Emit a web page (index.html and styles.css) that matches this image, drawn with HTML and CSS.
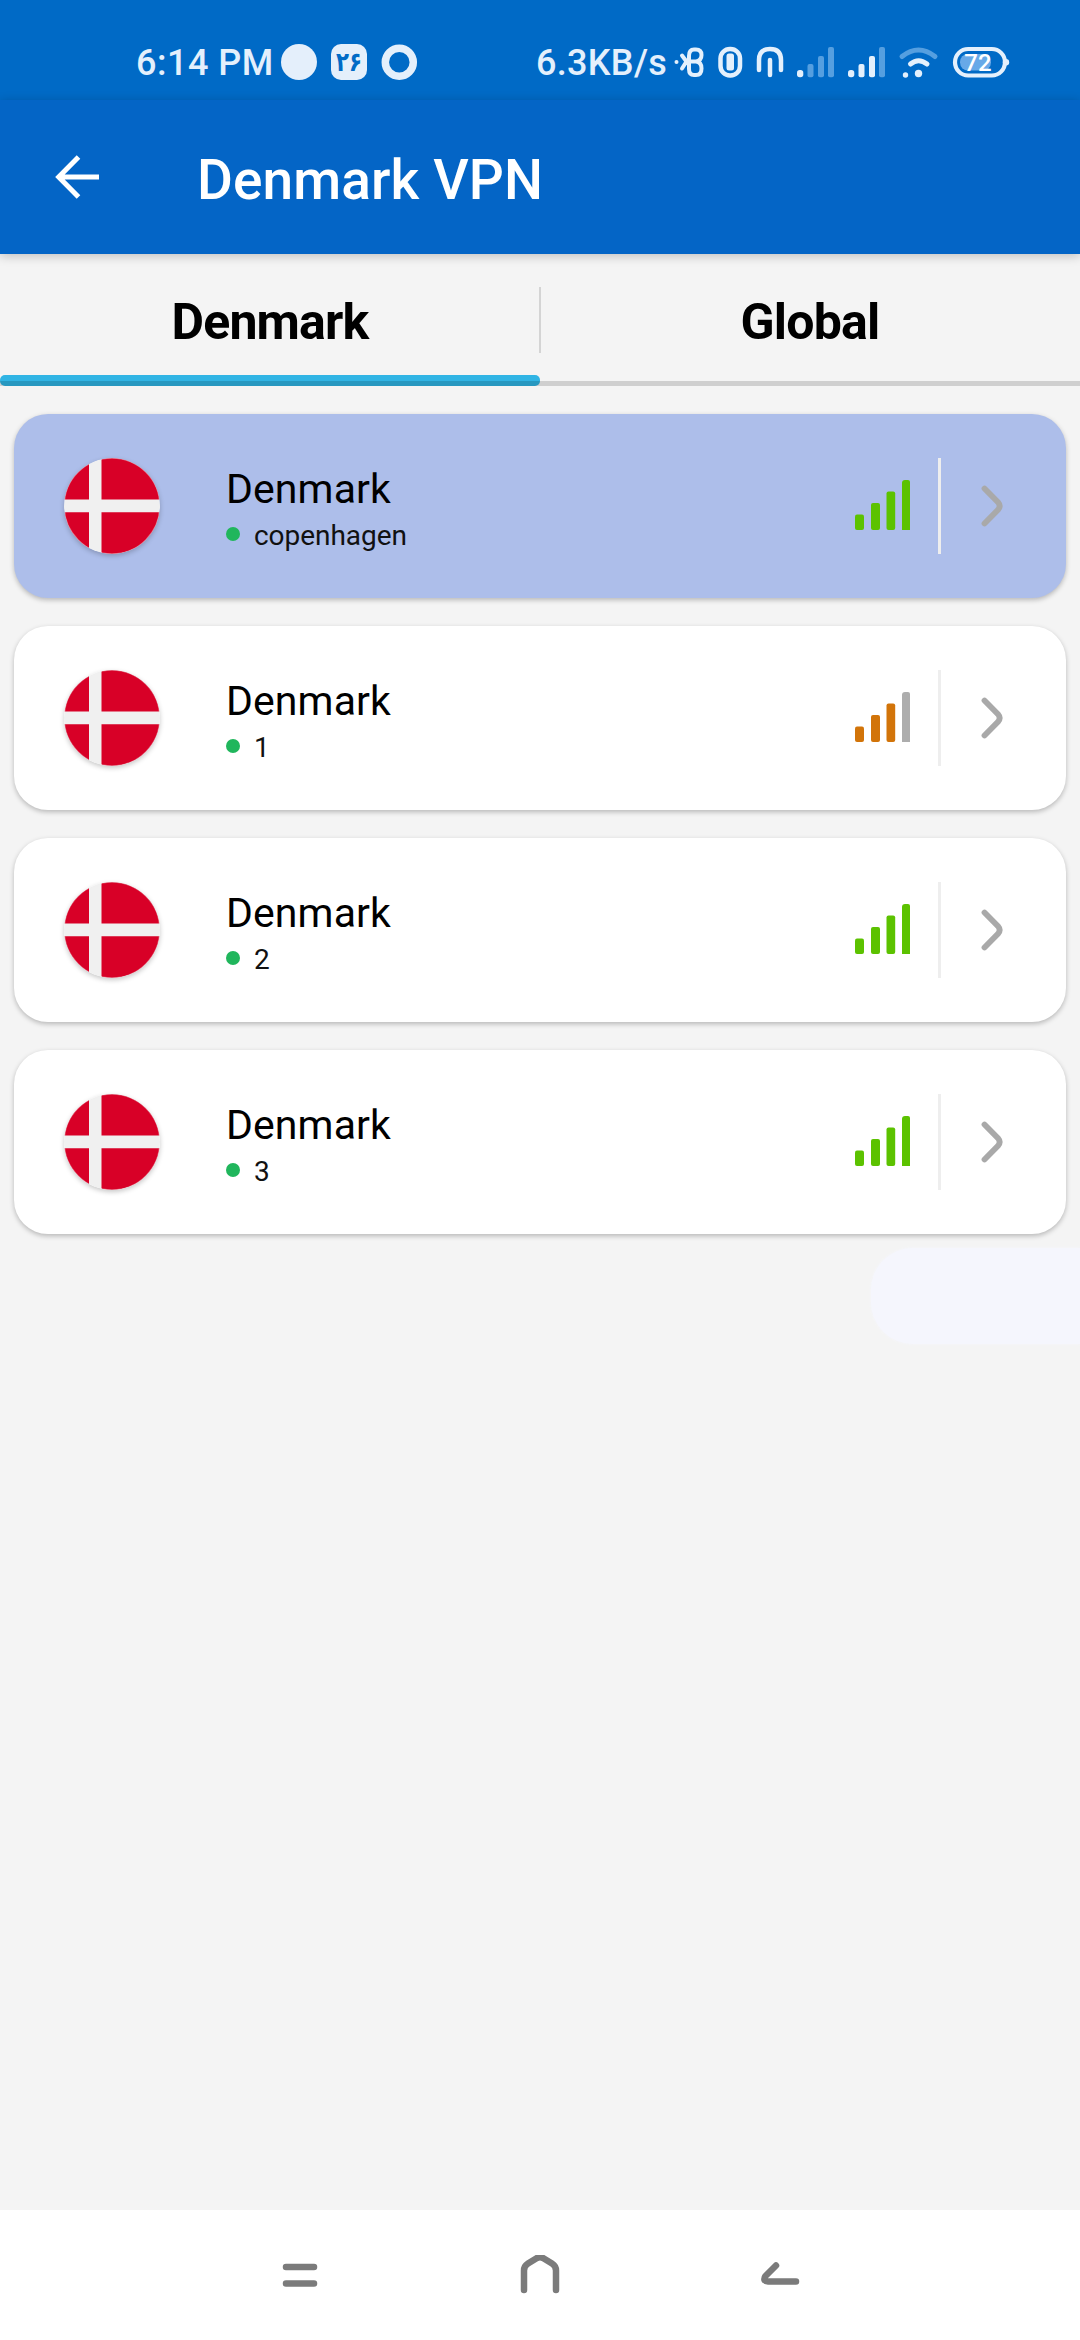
FILE: index.html
```html
<!DOCTYPE html>
<html lang="en">
<head>
<meta charset="utf-8">
<title>Denmark VPN</title>
<link rel="stylesheet" href="styles.css">
</head>
<body>
<svg width="0" height="0" class="defs">
  <symbol id="flag" viewBox="0 0 96 96">
    <clipPath id="round"><circle cx="48" cy="48" r="48"/></clipPath>
    <g clip-path="url(#round)">
      <rect width="96" height="96" fill="#f0f0f0"/>
      <path fill="#d80027" d="M0 0H25V41.5H0zM37.5 0H96V41.5H37.5zM0 54.2H25V96H0zM37.5 54.2H96V96H37.5z"/>
      <circle cx="48" cy="48" r="48" fill="none" stroke="#f0f0f0" stroke-opacity=".45" stroke-width="1.6"/>
    </g>
  </symbol>
  <symbol id="bars" viewBox="0 0 56 50">
    <rect x="0" y="34.5" width="9" height="15.5" rx="2"/>
    <rect x="16" y="23" width="9" height="27" rx="2"/>
    <rect x="31.5" y="11.5" width="8.7" height="38.5" rx="2"/>
    <path class="last" d="M47 50V3Q47 0 50 0H53Q55 0 55 2V50Z"/>
  </symbol>
  <symbol id="chevron" viewBox="0 0 22 42">
    <path d="M3.5 3.5L17 17.2Q20.300 21 17 24.800L3.500 38.500" fill="none" stroke="#a9a9a9" stroke-width="5.800" stroke-linecap="round"/>
  </symbol>
</svg>

<div class="screen">
  <header class="status">
    <span class="clock">6:14 PM</span>
    <svg class="notices" width="120" height="40" viewBox="280 42 120 40">
      <circle cx="299" cy="62" r="18" fill="#e4effb"/>
      <rect x="331" y="44" width="36" height="36" rx="10" fill="#e4effb"/>
      <text x="349" y="71" class="day" text-anchor="middle" textLength="26" lengthAdjust="spacingAndGlyphs">۲۶</text>
      <circle cx="399.300" cy="62.300" r="14" fill="none" stroke="#e4effb" stroke-width="7.500"/>
    </svg>
    <span class="speed">6.3KB/s</span>
    <svg class="system" width="340" height="40" viewBox="672 42 340 40" fill="none" stroke="#e4f0fc" stroke-linecap="round" stroke-linejoin="round">
      <g stroke-width="4.500">
        <path d="M689 56Q689 49.500 694 49.500H696Q701.500 49.500 701.500 55T696 61.500H686M696 61.500Q701.500 62 701.500 68.500T696 75H694Q689 75 689 69M689 56V69M682 55.500L686.500 61.500L682 68.500" stroke-width="4"/>
        <rect x="720.500" y="49" width="19.500" height="26.500" rx="9.500"/>
        <path d="M759 70V60Q759 49 770 49T781 60V70M770 60V75"/>
      </g>
      <circle cx="676.500" cy="62" r="2" fill="#e4f0fc" stroke="none"/>
      <rect x="726.500" y="53.500" width="7.500" height="17" rx="2.500" fill="#e4f0fc" stroke="none"/>
      <g fill="#e4f0fc" stroke="none">
        <rect x="797" y="70" width="6.300" height="7.300" rx="2.800"/>
        <g fill="#559fe0"><rect x="807.500" y="64" width="6" height="13.300" rx="2"/><rect x="818" y="56" width="6" height="21.300" rx="2"/><rect x="828" y="47" width="6" height="30.300" rx="2"/></g>
        <rect x="848" y="70" width="6.300" height="7.300" rx="2.800"/>
        <rect x="858.500" y="64" width="6" height="13.300" rx="2"/><rect x="869" y="56" width="6" height="21.300" rx="2"/>
        <rect x="879" y="47" width="6" height="30.300" rx="2" fill="#559fe0"/>
        <circle cx="905.500" cy="75" r="2.700"/><circle cx="918.500" cy="73.500" r="3.700"/>
      </g>
      <path d="M902 56.500Q918.500 43.500 935 56.500" stroke="#559fe0" stroke-width="5"/>
      <path d="M910.500 64Q918.500 57.500 927 64" stroke-width="5"/>
      <rect x="960" y="54" width="31" height="16.500" rx="8" fill="#67a9e8" stroke="none"/>
      <rect x="955" y="49" width="50" height="26.500" rx="13.200" stroke-width="4.200"/>
      <circle cx="1006" cy="62.200" r="3.200" fill="#e4f0fc" stroke="none"/>
      <text x="978" y="71" class="charge" text-anchor="middle">72</text>
    </svg>
  </header>

  <div class="appbar">
    <svg width="44" height="44" viewBox="0 0 44 44" fill="none" stroke="#fff" stroke-width="5"><path d="M23.500 2L3.700 22L23.500 42M4 22H44"/></svg>
    <h1>Denmark VPN</h1>
  </div>

  <nav class="tabs">
    <div class="tab active"><span>Denmark</span></div>
    <div class="tab"><span>Global</span></div>
  </nav>

  <main class="list">
    <div class="card selected">
      <svg class="flag"><use href="#flag"/></svg>
      <div class="info"><div class="name">Denmark</div><div class="place"><i></i>copenhagen</div></div>
      <svg class="signal"><use href="#bars"/></svg>
      <div class="rule"></div>
      <svg class="chevron"><use href="#chevron"/></svg>
    </div>
    <div class="card">
      <svg class="flag"><use href="#flag"/></svg>
      <div class="info"><div class="name">Denmark</div><div class="place"><i></i>1</div></div>
      <svg class="signal medium"><use href="#bars"/></svg>
      <div class="rule"></div>
      <svg class="chevron"><use href="#chevron"/></svg>
    </div>
    <div class="card">
      <svg class="flag"><use href="#flag"/></svg>
      <div class="info"><div class="name">Denmark</div><div class="place"><i></i>2</div></div>
      <svg class="signal"><use href="#bars"/></svg>
      <div class="rule"></div>
      <svg class="chevron"><use href="#chevron"/></svg>
    </div>
    <div class="card">
      <svg class="flag"><use href="#flag"/></svg>
      <div class="info"><div class="name">Denmark</div><div class="place"><i></i>3</div></div>
      <svg class="signal"><use href="#bars"/></svg>
      <div class="rule"></div>
      <svg class="chevron"><use href="#chevron"/></svg>
    </div>
    <div class="handle"></div>
  </main>

  <footer class="navbar">
    <svg width="40" height="40" viewBox="0 0 40 40"><path d="M6 12H34M6 28.500H34"/></svg>
    <svg width="40" height="40" viewBox="0 0 40 40"><path d="M4 35V15.500Q4 11 8 8.500L17 3Q20 1.500 23 3L32 8.500Q36 11 36 15.500V35"/></svg>
    <svg width="40" height="40" viewBox="0 0 40 40"><path d="M16 10.500L5.500 21Q4 23 4.500 25Q5.500 26.500 8 26.500H36"/></svg>
  </footer>
</div>
</body>
</html>
```
FILE: styles.css
```css
* { box-sizing: border-box; }
body { margin: 0; font-family: Roboto, "Liberation Sans", sans-serif; }
svg { display: block; flex: none; }
.defs { position: absolute; }
.screen { width: 1080px; height: 2340px; display: flex; flex-direction: column; background: #f4f4f4; overflow: hidden; }

.status { height: 100px; flex: none; display: flex; align-items: flex-start; padding: 42px 0 0 136px; background: #006ac6; color: #e4f0fc; font-size: 36px; font-weight: 500; line-height: 42px; white-space: nowrap; }
.clock { width: 144px; letter-spacing: .5px; }
.notices, .system { overflow: visible; }
.speed { width: 136px; margin-left: 136px; letter-spacing: .3px; }
.day { font: bold 27px "DejaVu Sans", sans-serif; letter-spacing: 0; fill: #006ac6; }
.charge { font: 500 24px Roboto, sans-serif; fill: #fff; stroke: none; }

.appbar { height: 154px; flex: none; display: flex; align-items: center; padding-left: 55px; background: #0465c6; color: #fff; box-shadow: 0 2px 10px rgba(0, 0, 0, .22); z-index: 1; }
.appbar h1 { margin: 5px 0 0 98px; font-size: 55px; line-height: 64px; font-weight: 500; letter-spacing: .1px; }

.tabs { height: 132px; flex: none; display: flex; }
.tab { flex: 1; display: flex; align-items: center; justify-content: center; padding-top: 8px; font-size: 50px; font-weight: 700; letter-spacing: -.8px; color: #000; border-bottom: 5px solid #cfcfcf; }
.tab.active { position: relative; }
.tab.active::before { content: ""; position: absolute; right: -1px; top: 33px; width: 2px; height: 66px; background: #d4d4d4; }
.tab.active::after { content: ""; position: absolute; left: 0; right: 0; bottom: -5px; height: 11px; border-radius: 5px; background: linear-gradient(#30b4e4 55%, #2798c0 55%); }

.list { flex: 1; display: flex; flex-direction: column; gap: 28px; padding: 28px 0 0 14px; }
.card { width: 1052px; height: 184px; flex: none; display: flex; align-items: center; padding-left: 50px; border-radius: 34px; background: #fff; box-shadow: 0 2px 5px rgba(0, 0, 0, .25); }
.card.selected { background: #adbeea; }
.flag { width: 96px; height: 96px; border-radius: 50%; box-shadow: 0 2px 5px rgba(0, 0, 0, .22); }
.info { width: 629px; margin-left: 66px; padding-top: 5px; color: #000; }
.name { font-size: 41px; line-height: 48px; letter-spacing: .1px; }
.place { display: flex; align-items: center; font-size: 28px; line-height: 34px; margin-top: 6px; color: #111; letter-spacing: -.05px; }
.place i { width: 14px; height: 14px; margin: -3px 14px 0 0; border-radius: 50%; background: #20b65c; }
.signal { width: 56px; height: 50px; fill: #5cc200; margin-top: -2px; --last: #5cc200; }
.signal.medium { fill: #d27409; --last: #adadad; }
.last { fill: var(--last); }
.rule { width: 3px; height: 96px; margin-left: 27px; background: #eee; }
.chevron { width: 22px; height: 42px; margin-left: 40px; }
.handle { align-self: flex-end; width: 209px; height: 96px; margin-top: -14px; border-radius: 42px 0 0 42px; background: #f5f6fd; box-shadow: 0 0 3px #f5f6fd; flex: none; }

.navbar { height: 130px; flex: none; display: flex; justify-content: center; gap: 200px; padding-top: 45px; background: #fff; }
.navbar svg { fill: none; stroke: #7b7b7b; stroke-width: 6.500px; stroke-linecap: round; stroke-linejoin: round; }
```
